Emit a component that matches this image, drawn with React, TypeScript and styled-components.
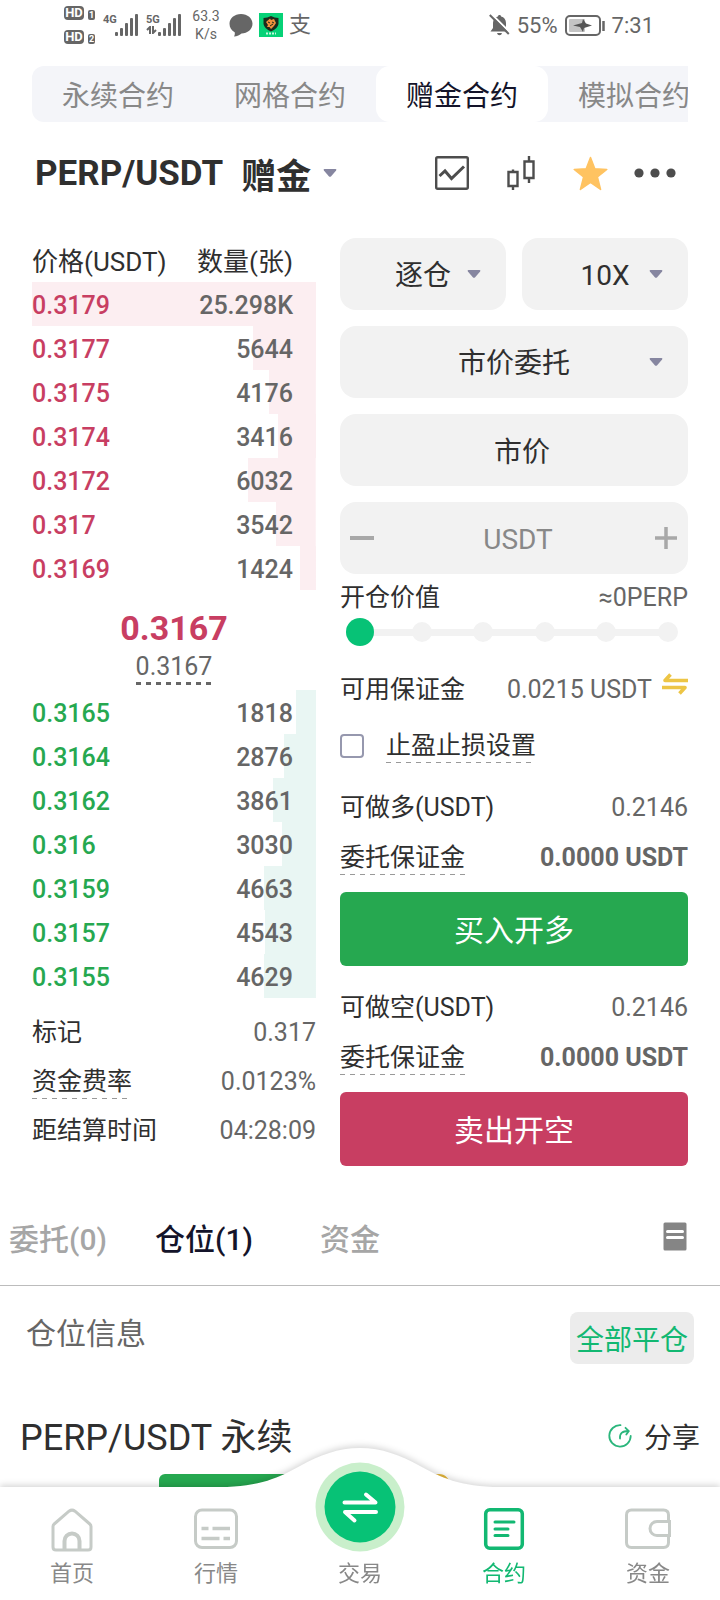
import React, { useState } from "react";
import styled, { createGlobalStyle } from "styled-components";

const GlobalStyle = createGlobalStyle`
  * { box-sizing: border-box; }
  body {
    margin: 0;
    background: #fff;
    color: #2f2f2f;
    font-family: Roboto, "Noto Sans CJK SC", sans-serif;
    font-size: 25px;
  }
  button, input, select {
    font: inherit;
    color: inherit;
    margin: 0;
    padding: 0;
    border: 0;
    background: none;
  }
  button { cursor: pointer; }
  svg { display: block; flex: none; }
`;

const color = {
  text: "#2f2f2f",
  muted: "#666",
  faint: "#888",
  green: "#26a850",
  red: "#c83e62",
  brand: "#07c276",
  field: "#f2f2f2",
};

const Page = styled.div`
  padding-bottom: 60px;
  overflow-x: hidden;
`;

/* ---------- status bar ---------- */

const StatusBar = styled.header`
  display: flex;
  align-items: center;
  justify-content: space-between;
  height: 50px;
  padding: 0 66px 0 64px;
  color: ${color.muted};
  font-size: 22px;
`;

const StatusGroup = styled.div<{ $gap: number }>`
  display: flex;
  align-items: center;
  gap: ${(p) => p.$gap}px;
`;

const HdStack = styled.div`
  display: flex;
  flex-direction: column;
  gap: 10px;
`;

const HdLine = styled.div`
  display: flex;
  align-items: flex-end;
  gap: 4px;
`;

const HdBadge = styled.span`
  width: 20px;
  height: 14px;
  border-radius: 4px;
  background: ${color.muted};
  color: #fff;
  font-size: 13px;
  font-weight: 700;
  line-height: 14px;
  text-align: center;
`;

const SimBadge = styled.span`
  width: 7px;
  height: 10px;
  border-radius: 2px;
  background: ${color.muted};
  color: #fff;
  font-size: 9px;
  font-weight: 700;
  line-height: 10px;
  text-align: center;
`;

const SignalBox = styled.div`
  display: flex;
  align-items: flex-end;
  height: 22px;
`;

const SignalLabel = styled.span`
  display: flex;
  flex-direction: column;
  align-self: flex-start;
  width: 12px;
  font-size: 11px;
  font-weight: 700;
  line-height: 12px;
`;

const Speed = styled.span`
  width: 34px;
  font-size: 14px;
  line-height: 18px;
  text-align: center;
`;

const PayGlyph = styled.span`
  font-size: 22px;
  line-height: 24px;
`;

/* ---------- top tabs and pair header ---------- */

const ProductTabs = styled.nav`
  display: flex;
  height: 56px;
  margin: 16px 32px 0;
  border-radius: 12px 0 0 12px;
  background: #f4f5f9;
  overflow: hidden;
`;

const ProductTab = styled.button<{ $active?: boolean }>`
  flex: none;
  padding: 0 30px;
  border-radius: 14px;
  background: ${(p) => (p.$active ? "#fff" : "transparent")};
  color: ${(p) => (p.$active ? "#14142a" : color.faint)};
  font-size: 28px;
  white-space: nowrap;
`;

const PairBar = styled.div`
  display: flex;
  align-items: center;
  justify-content: space-between;
  height: 104px;
  padding: 0 44px 2px 35px;
`;

const PairButton = styled.button`
  display: flex;
  align-items: center;
  gap: 18px;
  font-size: 35px;
  font-weight: 700;
  white-space: nowrap;
  svg { margin-left: -6px; }
`;

const ToolGroup = styled.div`
  display: flex;
  align-items: center;
  gap: 26px;
`;

const Tools = styled.div`
  display: flex;
  align-items: center;
  gap: 38px;
`;

const IconButton = styled.button`
  display: flex;
  align-items: center;
  justify-content: center;
`;

/* ---------- trading area ---------- */

const Trading = styled.main`
  display: grid;
  grid-template-columns: 284fr 348fr;
  gap: 24px;
  padding: 12px 32px 0;
`;

const Column = styled.section`
  min-width: 0;
`;

const Book = styled.table`
  width: 100%;
  border-collapse: collapse;
  th, td { padding: 3px 0 0; height: 44px; }
`;

const HeadCell = styled.th<{ $end?: boolean }>`
  color: ${color.text};
  font-size: 26px;
  font-weight: 400;
  line-height: 32px;
  white-space: nowrap;
  text-align: ${(p) => (p.$end ? "right" : "left")};
  && { padding-right: ${(p) => (p.$end ? 23 : 0)}px; }
`;

const DepthRow = styled.tr<{ $tint: string }>`
  background-image: linear-gradient(${(p) => p.$tint}, ${(p) => p.$tint});
  background-repeat: no-repeat;
  background-position: right;
`;

const PriceCell = styled.td<{ $tone: string }>`
  color: ${(p) => p.$tone};
  font-weight: 500;
`;

const AmountCell = styled.td`
  color: ${color.muted};
  font-weight: 500;
  text-align: right;
  && { padding-right: 23px; }
`;

const LastPrice = styled.div`
  display: flex;
  flex-direction: column;
  align-items: center;
  height: 97px;
  padding-top: 15px;
`;

const LastValue = styled.strong`
  color: ${color.red};
  font-size: 34px;
  line-height: 40px;
`;

const IndexValue = styled.span`
  padding-top: 1px;
  background: repeating-linear-gradient(90deg, ${color.muted} 0 5px, transparent 5px 10px) bottom / 100% 3px no-repeat;
  color: ${color.muted};
  line-height: 36px;
`;

const InfoList = styled.div`
  padding-top: 10px;
`;

const InfoRow = styled.div<{ $height: number }>`
  display: flex;
  align-items: center;
  justify-content: space-between;
  height: ${(p) => p.$height}px;
  white-space: nowrap;
`;

const Term = styled.span<{ $hint?: boolean }>`
  line-height: 34px;
  background: ${(p) =>
    p.$hint
      ? "repeating-linear-gradient(90deg, #999 0 5px, transparent 5px 10px) bottom / 100% 1px no-repeat"
      : "none"};
`;

const Value = styled.span<{ $strong?: boolean }>`
  color: ${color.muted};
  font-weight: ${(p) => (p.$strong ? 700 : 400)};
  line-height: 34px;
`;

/* ---------- order form ---------- */

const Fields = styled.div`
  display: grid;
  grid-template-columns: 1fr 1fr;
  gap: 16px;
`;

const Field = styled.div<{ $wide?: boolean }>`
  display: flex;
  align-items: center;
  grid-column: ${(p) => (p.$wide ? "1 / -1" : "auto")};
  position: relative;
  height: 72px;
  border-radius: 16px;
  background: ${color.field};
  > svg {
    position: absolute;
    right: 25px;
    pointer-events: none;
  }
`;

const Select = styled.select`
  width: 100%;
  height: 100%;
  padding-top: 3px;
  appearance: none;
  font-size: 28px;
  text-align: center;
  text-align-last: center;
`;

const TextInput = styled.input`
  flex: 1;
  min-width: 0;
  height: 100%;
  padding: 2px 0 0 8px;
  font-size: 28px;
  text-align: center;
  outline: none;
  &::placeholder { color: ${color.faint}; opacity: 1; }
`;

const PriceInput = styled(TextInput)`
  padding: 0 0 0 16px;
`;

const StepButton = styled(IconButton)`
  width: 44px;
  height: 100%;
`;

const OpenValue = styled.div`
  padding-top: 4px;
`;

const SliderBox = styled.div`
  display: grid;
  align-items: center;
  height: 28px;
  margin: 0 6px;
  > * { grid-area: 1 / 1; }
`;

const SliderDots = styled.div`
  display: flex;
  justify-content: space-between;
  padding: 0 4px;
  background: linear-gradient(${color.field}, ${color.field}) center / calc(100% - 28px) 7px no-repeat;
`;

const SliderDot = styled.span`
  width: 20px;
  height: 20px;
  border-radius: 50%;
  background: ${color.field};
`;

const SliderInput = styled.input`
  width: 100%;
  height: 28px;
  appearance: none;
  background: transparent;
  &::-webkit-slider-thumb {
    appearance: none;
    width: 28px;
    height: 28px;
    border-radius: 50%;
    background: ${color.brand};
  }
`;

const Balance = styled.div`
  display: flex;
  gap: 10px;
  align-items: flex-start;
`;

const AvailableRow = styled(InfoRow)`
  margin-top: 24px;
`;

const TpSlRow = styled.label`
  display: flex;
  align-items: center;
  gap: 22px;
  height: 41px;
  margin-top: 15px;
`;

const Checkbox = styled.input`
  appearance: none;
  width: 24px;
  height: 24px;
  border: 2px solid #9698ae;
  border-radius: 4px;
  &:checked { background: ${color.brand}; }
`;

const OrderBlock = styled.div`
  margin-top: 17px;
`;

const OrderButton = styled.button<{ $tone: string }>`
  width: 100%;
  height: 74px;
  margin-top: 9px;
  padding-bottom: 3px;
  border-radius: 6px;
  background: ${(p) => p.$tone};
  color: #fff;
  font-size: 30px;
`;

/* ---------- positions ---------- */

const AccountTabs = styled.nav`
  display: flex;
  align-items: center;
  justify-content: space-between;
  height: 92px;
  margin-top: 28px;
  padding: 0 33px 6px 0;
  border-bottom: 1px solid #bcbcbc;
`;

const AccountTabList = styled.div`
  display: flex;
  margin-left: -15px;
`;

const AccountTab = styled.button<{ $active?: boolean }>`
  width: 146px;
  color: ${(p) => (p.$active ? "#14142a" : "#a6a6a6")};
  font-size: 30px;
  font-weight: 500;
`;

const PositionHead = styled.div`
  display: flex;
  align-items: flex-start;
  justify-content: space-between;
  margin-top: 26px;
  padding: 0 26px;
`;

const PositionTitle = styled.h2`
  margin: 0;
  color: ${color.muted};
  font-size: 30px;
  font-weight: 400;
  line-height: 44px;
`;

const CloseAll = styled.button`
  height: 52px;
  padding: 0 6px;
  border-radius: 8px;
  background: #ececec;
  color: #12b872;
  font-size: 28px;
`;

const PositionRow = styled.div`
  display: flex;
  align-items: center;
  justify-content: space-between;
  height: 60px;
  margin-top: 42px;
  padding: 0 20px;
`;

const PositionPair = styled.h3`
  margin: 0;
  padding-bottom: 4px;
  font-size: 36px;
  font-weight: 400;
`;

const ShareButton = styled.button`
  display: flex;
  align-items: center;
  gap: 12px;
  font-size: 28px;
`;

const PositionTags = styled.div`
  display: flex;
  gap: 124px;
  margin: 8px 0 0 159px;
`;

const SideTag = styled.div`
  width: 145px;
  height: 50px;
  border-radius: 6px;
  background: ${color.green};
`;

/* ---------- bottom navigation ---------- */

const BottomNav = styled.nav`
  position: fixed;
  right: 0;
  bottom: 0;
  left: 0;
  display: grid;
  grid-template-columns: repeat(5, 1fr);
  height: 113px;
  padding-top: 20px;
  background: #fff;
  filter: drop-shadow(0 -2px 3px rgba(0, 0, 0, 0.16));
`;

const NavBump = styled.svg`
  position: absolute;
  bottom: 112px;
  left: calc(50% - 140px);
`;

const NavLink = styled.a<{ $active?: boolean }>`
  position: relative;
  display: flex;
  flex-direction: column;
  align-items: center;
  gap: 10px;
  color: ${(p) => (p.$active ? "#12b872" : color.faint)};
  font-size: 22px;
  line-height: 24px;
  text-decoration: none;
`;

const NavIcon = styled.span`
  display: flex;
  align-items: flex-end;
  justify-content: center;
  height: 45px;
`;

/* ---------- drawings ---------- */

const Caret = () => (
  <svg width="14" height="8" viewBox="0 0 14 8" fill="#8686a0">
    <path d="M1.5 0h11q1.4.4.6 1.6L8.200 7.300q-1.200 1-2.400 0L.9 1.600Q.1.400 1.500 0z" />
  </svg>
);

const SignalBars = () => (
  <svg width="23" height="22" viewBox="0 0 23 22" fill="#666">
    <rect x="0" y="18" width="3" height="4" rx="1" />
    <rect x="5" y="14" width="3" height="8" rx="1" />
    <rect x="10" y="9" width="3" height="13" rx="1" />
    <rect x="15" y="4" width="3" height="18" rx="1" />
    <rect x="20" y="0" width="3" height="22" rx="1" />
  </svg>
);

const DataArrows = () => (
  <svg width="11" height="8" viewBox="0 0 11 8" fill="none" stroke="#666" strokeWidth="2">
    <path d="M4 8V1L1 4M7 0v7l3-3" />
  </svg>
);

const ChatIcon = () => (
  <svg width="24" height="23" viewBox="0 0 24 23" fill="#666">
    <path d="M12 0c6.500 0 11.500 4.300 11.500 9.800S18.500 19.500 12.500 19.500c-1.500 1.500-4.500 3-7.500 3 .8-1.200 1-2.600.7-4.200C2.500 16.500.5 13.500.5 9.800.5 4.300 5.500 0 12 0z" />
  </svg>
);

const AppIcon = () => (
  <svg width="24" height="24" viewBox="0 0 24 24">
    <rect width="24" height="24" fill="#06d277" />
    <path d="M4.500 5q4 0 7.500-2 3.500 2 7.500 2v6q-1 5-7.500 7.500Q5.500 16 4.500 11z" fill="#1c2a1d" />
    <path d="M7 9l4-3.500 1 1.500 3-1 2 4-2 3-3 3-1.500-2-2.500 0 1-2z" fill="#f0903c" />
    <path d="M9 9l2 1M13 9l2 1M11 13l3-2" stroke="#1c2a1d" strokeWidth="1" />
    <path d="M7 20.500h10" stroke="#c8f7df" strokeWidth="2" strokeDasharray="2 1" />
  </svg>
);

const BellOff = () => (
  <svg width="21" height="22" viewBox="0 0 21 22">
    <path d="M10.500 1c1 0 1.500.6 1.600 1.500 3 .7 4.900 3.300 4.900 6.500v5l2.500 3.500H1.500L4 14V9c0-3.200 1.900-5.800 4.900-6.500C9 1.600 9.500 1 10.500 1zM8 19h5q-.5 2.200-2.500 2.200T8 19z" fill="#666" />
    <path d="M2.500 0l19 19" stroke="#fff" strokeWidth="2" />
    <path d="M.8 1l19 19" stroke="#666" strokeWidth="2" />
  </svg>
);

const Battery = () => (
  <svg width="40" height="21" viewBox="0 0 40 21">
    <rect x="1" y="1" width="34" height="19" rx="4" fill="none" stroke="#666" strokeWidth="2" />
    <rect x="4" y="4" width="16" height="13" rx="1" fill="#c4c4c4" />
    <path d="M8 10.500l9-2.500 1-4 3 4.500 6 2-8 2.500-1 4-3-5z" fill="#555" />
    <path d="M38.500 6v10" stroke="#666" strokeWidth="2.500" />
  </svg>
);

const ChartIcon = () => (
  <svg width="34" height="34" viewBox="0 0 34 34" fill="none" stroke="#4d4d4d">
    <rect x="1.200" y="1.200" width="31.600" height="31.600" rx="1.500" strokeWidth="2.400" />
    <path d="M4.500 20l5.500-5 6.500 7.500L29 10.500" strokeWidth="3" />
  </svg>
);

const CandleIcon = () => (
  <svg width="28" height="34" viewBox="0 0 28 34" fill="none" stroke="#4d4d4d" strokeWidth="2.400">
    <path d="M1.500 16h9v14h-9zM6 13.500V16M6 30v4M17.500 5.500h9V22h-9zM22 0v5.500M22 22v5" />
  </svg>
);

const StarIcon = () => (
  <svg width="35" height="35" viewBox="0 0 35 35" fill="#ffc361" stroke="#ffc361" strokeWidth="1.500" strokeLinejoin="round">
    <path d="M17.500 1.500l4.300 11.300 12 .6-9.400 7.600 3.200 12.500-10.100-7-10.100 7 3.200-12.500-9.400-7.600 12-.6z" />
  </svg>
);

const MoreIcon = () => (
  <svg width="42" height="10" viewBox="0 0 42 10" fill="#4d4d4d">
    <circle cx="5" cy="5" r="4.600" />
    <circle cx="21" cy="5" r="4.600" />
    <circle cx="37" cy="5" r="4.600" />
  </svg>
);

const MinusIcon = () => (
  <svg width="24" height="4" viewBox="0 0 24 4" fill="#a8a8a8">
    <rect width="24" height="4" />
  </svg>
);

const PlusIcon = () => (
  <svg width="22" height="22" viewBox="0 0 22 22" stroke="#a8a8a8" strokeWidth="3.500">
    <path d="M0 11h22M11 0v22" />
  </svg>
);

const TransferIcon = () => (
  <svg width="26" height="22" viewBox="0 0 26 22" fill="none" stroke="#edc545" strokeWidth="3.600" strokeLinejoin="round">
    <path d="M26 7.500H3L8.500 1.500M0 14.500h23l-5.500 6" />
  </svg>
);

const DocIcon = () => (
  <svg width="24" height="29" viewBox="0 0 24 29">
    <rect x=".5" y=".5" width="23" height="28" rx="1.500" fill="#858585" />
    <path d="M4.500 9.500h15M4.500 15.500h15" stroke="#fff" strokeWidth="3" strokeLinecap="round" />
  </svg>
);

const ShareIcon = () => (
  <svg width="24" height="24" viewBox="0 0 24 24" fill="none" stroke="#2bb67c" strokeWidth="1.800" strokeLinecap="round">
    <path d="M12.500 1.200A10.700 10.700 0 1 0 22.700 12M12 14.500C11.500 9.500 14 7 20.500 7M17.500 3.800L20.800 7l-2.500 3.500" />
  </svg>
);

const HomeIcon = () => (
  <svg width="44" height="44" viewBox="0 0 44 44" fill="none" stroke="#c6cbc7" strokeWidth="3">
    <path d="M3 18.500Q3 17 4.200 16L19 3.200q3-2.200 6 0L39.800 16q1.200 1 1.200 2.500V39q0 3-3 3H6q-3 0-3-3z" />
    <path d="M14.500 42V33a7.500 7.500 0 0 1 15 0v9" strokeWidth="4" />
  </svg>
);

const MarketIcon = () => (
  <svg width="44" height="44" viewBox="0 0 44 44" fill="none" stroke="#c6cbc7" strokeWidth="3">
    <rect x="1.500" y="2" width="41" height="37.500" rx="6.500" />
    <path d="M7.500 20.500h7M18.500 20.500h17.500M7.500 30.500h18M29.500 30.500h6.500" strokeWidth="3.500" />
  </svg>
);

const ContractIcon = () => (
  <svg width="44" height="44" viewBox="0 0 44 44" fill="none" stroke="#12b872" strokeWidth="3.500">
    <rect x="3.700" y="1.800" width="36.600" height="38.500" rx="4" />
    <path d="M13 14h19M13 21h13M13 27.500h13" strokeWidth="3" strokeLinecap="round" />
  </svg>
);

const WalletIcon = () => (
  <svg width="46" height="44" viewBox="0 0 46 44" fill="none" stroke="#c6cbc7" strokeWidth="3">
    <path d="M43.500 13.500V7q0-5-5-5H6.500q-5 0-5 5v27.500q0 5 5 5h32q5 0 5-5V28" />
    <path d="M44.500 13.500H32a7 7 0 0 0 0 14h12.500z" />
  </svg>
);

const TradeIcon = () => (
  <svg width="90" height="90" viewBox="0 0 90 90">
    <circle cx="45" cy="45" r="44.500" fill="#c9efcb" />
    <circle cx="45" cy="45" r="35.500" fill="#07c276" />
    <path d="M29.500 40.500h31l-9.500-8M61 50H30l9.500 8.500" fill="none" stroke="#fff" strokeWidth="4" strokeLinecap="round" strokeLinejoin="round" />
  </svg>
);

const CoinEdge = () => (
  <svg width="22" height="22" viewBox="0 0 22 22">
    <circle cx="11" cy="11" r="9.500" fill="none" stroke="#e8b93c" strokeWidth="3" />
  </svg>
);

/* ---------- data ---------- */

const asks: [string, string, number][] = [
  ["0.3179", "25.298K", 25298],
  ["0.3177", "5644", 5644],
  ["0.3175", "4176", 4176],
  ["0.3174", "3416", 3416],
  ["0.3172", "6032", 6032],
  ["0.317", "3542", 3542],
  ["0.3169", "1424", 1424],
];

const bids: [string, string, number][] = [
  ["0.3165", "1818", 1818],
  ["0.3164", "2876", 2876],
  ["0.3162", "3861", 3861],
  ["0.316", "3030", 3030],
  ["0.3159", "4663", 4663],
  ["0.3157", "4543", 4543],
  ["0.3155", "4629", 4629],
];

const deepest = 25298;

const Depth = ({ rows, tone, tint }: { rows: [string, string, number][]; tone: string; tint: string }) => (
  <tbody>
    {rows.map(([price, label, size]) => (
      <DepthRow key={price} $tint={tint} style={{ backgroundSize: `${(size / deepest) * 100}% 100%` }}>
        <PriceCell $tone={tone}>{price}</PriceCell>
        <AmountCell>{label}</AmountCell>
      </DepthRow>
    ))}
  </tbody>
);

const OrderSide = ({ limit, action, tone }: { limit: string; action: string; tone: string }) => (
  <OrderBlock>
    <InfoRow $height={50}>
      <Term>{limit}</Term>
      <Value>0.2146</Value>
    </InfoRow>
    <InfoRow $height={50}>
      <Term $hint>委托保证金</Term>
      <Value $strong>0.0000 USDT</Value>
    </InfoRow>
    <OrderButton type="button" $tone={tone}>{action}</OrderButton>
  </OrderBlock>
);

export default function App() {
  const [ratio, setRatio] = useState(0);
  const [amount, setAmount] = useState("");

  return (
    <>
      <GlobalStyle />
      <Page>
        <StatusBar>
          <StatusGroup $gap={8}>
            <HdStack>
              <HdLine><HdBadge>HD</HdBadge><SimBadge>1</SimBadge></HdLine>
              <HdLine><HdBadge>HD</HdBadge><SimBadge>2</SimBadge></HdLine>
            </HdStack>
            <SignalBox>
              <SignalLabel>4G</SignalLabel>
              <SignalBars />
            </SignalBox>
            <SignalBox>
              <SignalLabel>5G<DataArrows /></SignalLabel>
              <SignalBars />
            </SignalBox>
            <StatusGroup $gap={6}>
              <Speed>63.3 K/s</Speed>
              <ChatIcon />
              <AppIcon />
              <PayGlyph>支</PayGlyph>
            </StatusGroup>
          </StatusGroup>
          <StatusGroup $gap={7}>
            <BellOff />
            <span>55%</span>
            <Battery />
            <span>7:31</span>
          </StatusGroup>
        </StatusBar>

        <ProductTabs>
          <ProductTab type="button">永续合约</ProductTab>
          <ProductTab type="button">网格合约</ProductTab>
          <ProductTab type="button" $active>赠金合约</ProductTab>
          <ProductTab type="button">模拟合约</ProductTab>
        </ProductTabs>

        <PairBar>
          <PairButton type="button">
            <span>PERP/USDT</span>
            <span>赠金</span>
            <Caret />
          </PairButton>
          <ToolGroup>
            <Tools>
              <IconButton type="button" aria-label="图表"><ChartIcon /></IconButton>
              <IconButton type="button" aria-label="K线"><CandleIcon /></IconButton>
              <IconButton type="button" aria-label="收藏"><StarIcon /></IconButton>
            </Tools>
            <IconButton type="button" aria-label="更多"><MoreIcon /></IconButton>
          </ToolGroup>
        </PairBar>

        <Trading>
          <Column>
            <Book>
              <thead>
                <tr>
                  <HeadCell scope="col">价格(USDT)</HeadCell>
                  <HeadCell scope="col" $end>数量(张)</HeadCell>
                </tr>
              </thead>
              <Depth rows={asks} tone={color.red} tint="#fceef1" />
              <tbody>
                <tr>
                  <td colSpan={2}>
                    <LastPrice>
                      <LastValue>0.3167</LastValue>
                      <IndexValue>0.3167</IndexValue>
                    </LastPrice>
                  </td>
                </tr>
              </tbody>
              <Depth rows={bids} tone={color.green} tint="#e9f6f3" />
            </Book>
            <InfoList>
              <InfoRow $height={49}><Term>标记</Term><Value>0.317</Value></InfoRow>
              <InfoRow $height={49}><Term $hint>资金费率</Term><Value>0.0123%</Value></InfoRow>
              <InfoRow $height={49}><Term>距结算时间</Term><Value>04:28:09</Value></InfoRow>
            </InfoList>
          </Column>

          <Column>
            <Fields>
              <Field>
                <Select aria-label="保证金模式"><option>逐仓</option></Select>
                <Caret />
              </Field>
              <Field>
                <Select aria-label="杠杆"><option>10X</option></Select>
                <Caret />
              </Field>
              <Field $wide>
                <Select aria-label="委托类型"><option>市价委托</option></Select>
                <Caret />
              </Field>
              <Field $wide>
                <PriceInput aria-label="价格" value="市价" readOnly />
              </Field>
              <Field $wide>
                <StepButton type="button" aria-label="减少"><MinusIcon /></StepButton>
                <TextInput
                  aria-label="数量"
                  placeholder="USDT"
                  value={amount}
                  onChange={(e) => setAmount(e.target.value)}
                />
                <StepButton type="button" aria-label="增加"><PlusIcon /></StepButton>
              </Field>
            </Fields>

            <OpenValue>
              <InfoRow $height={40}>
                <Term>开仓价值</Term>
                <Value>≈0PERP</Value>
              </InfoRow>
              <SliderBox>
                <SliderDots>
                  {[0, 1, 2, 3, 4, 5].map((n) => <SliderDot key={n} />)}
                </SliderDots>
                <SliderInput
                  type="range"
                  aria-label="仓位比例"
                  min={0}
                  max={100}
                  value={ratio}
                  onChange={(e) => setRatio(Number(e.target.value))}
                />
              </SliderBox>
            </OpenValue>

            <AvailableRow $height={40}>
              <Term>可用保证金</Term>
              <Balance>
                <Value>0.0215 USDT</Value>
                <IconButton type="button" aria-label="划转"><TransferIcon /></IconButton>
              </Balance>
            </AvailableRow>

            <TpSlRow>
              <Checkbox type="checkbox" />
              <Term $hint>止盈止损设置</Term>
            </TpSlRow>

            <OrderSide limit="可做多(USDT)" action="买入开多" tone={color.green} />
            <OrderSide limit="可做空(USDT)" action="卖出开空" tone={color.red} />
          </Column>
        </Trading>

        <AccountTabs>
          <AccountTabList>
            <AccountTab type="button">委托(0)</AccountTab>
            <AccountTab type="button" $active>仓位(1)</AccountTab>
            <AccountTab type="button">资金</AccountTab>
          </AccountTabList>
          <IconButton type="button" aria-label="历史记录"><DocIcon /></IconButton>
        </AccountTabs>

        <PositionHead>
          <PositionTitle>仓位信息</PositionTitle>
          <CloseAll type="button">全部平仓</CloseAll>
        </PositionHead>
        <PositionRow>
          <PositionPair>PERP/USDT 永续</PositionPair>
          <ShareButton type="button"><ShareIcon />分享</ShareButton>
        </PositionRow>
        <PositionTags>
          <SideTag />
          <CoinEdge />
        </PositionTags>
      </Page>

      <BottomNav>
        <NavBump width="280" height="40" viewBox="0 0 280 40" fill="#fff">
          <path d="M0 39C40 39 60 29 80 18C100 7 118 0 140 0C162 0 180 7 200 18C220 29 240 39 280 39V40H0z" />
        </NavBump>
        <NavLink href="#home"><NavIcon><HomeIcon /></NavIcon>首页</NavLink>
        <NavLink href="#market"><NavIcon><MarketIcon /></NavIcon>行情</NavLink>
        <NavLink href="#trade"><NavIcon><TradeIcon /></NavIcon>交易</NavLink>
        <NavLink href="#contract" $active><NavIcon><ContractIcon /></NavIcon>合约</NavLink>
        <NavLink href="#assets"><NavIcon><WalletIcon /></NavIcon>资金</NavLink>
      </BottomNav>
    </>
  );
}
